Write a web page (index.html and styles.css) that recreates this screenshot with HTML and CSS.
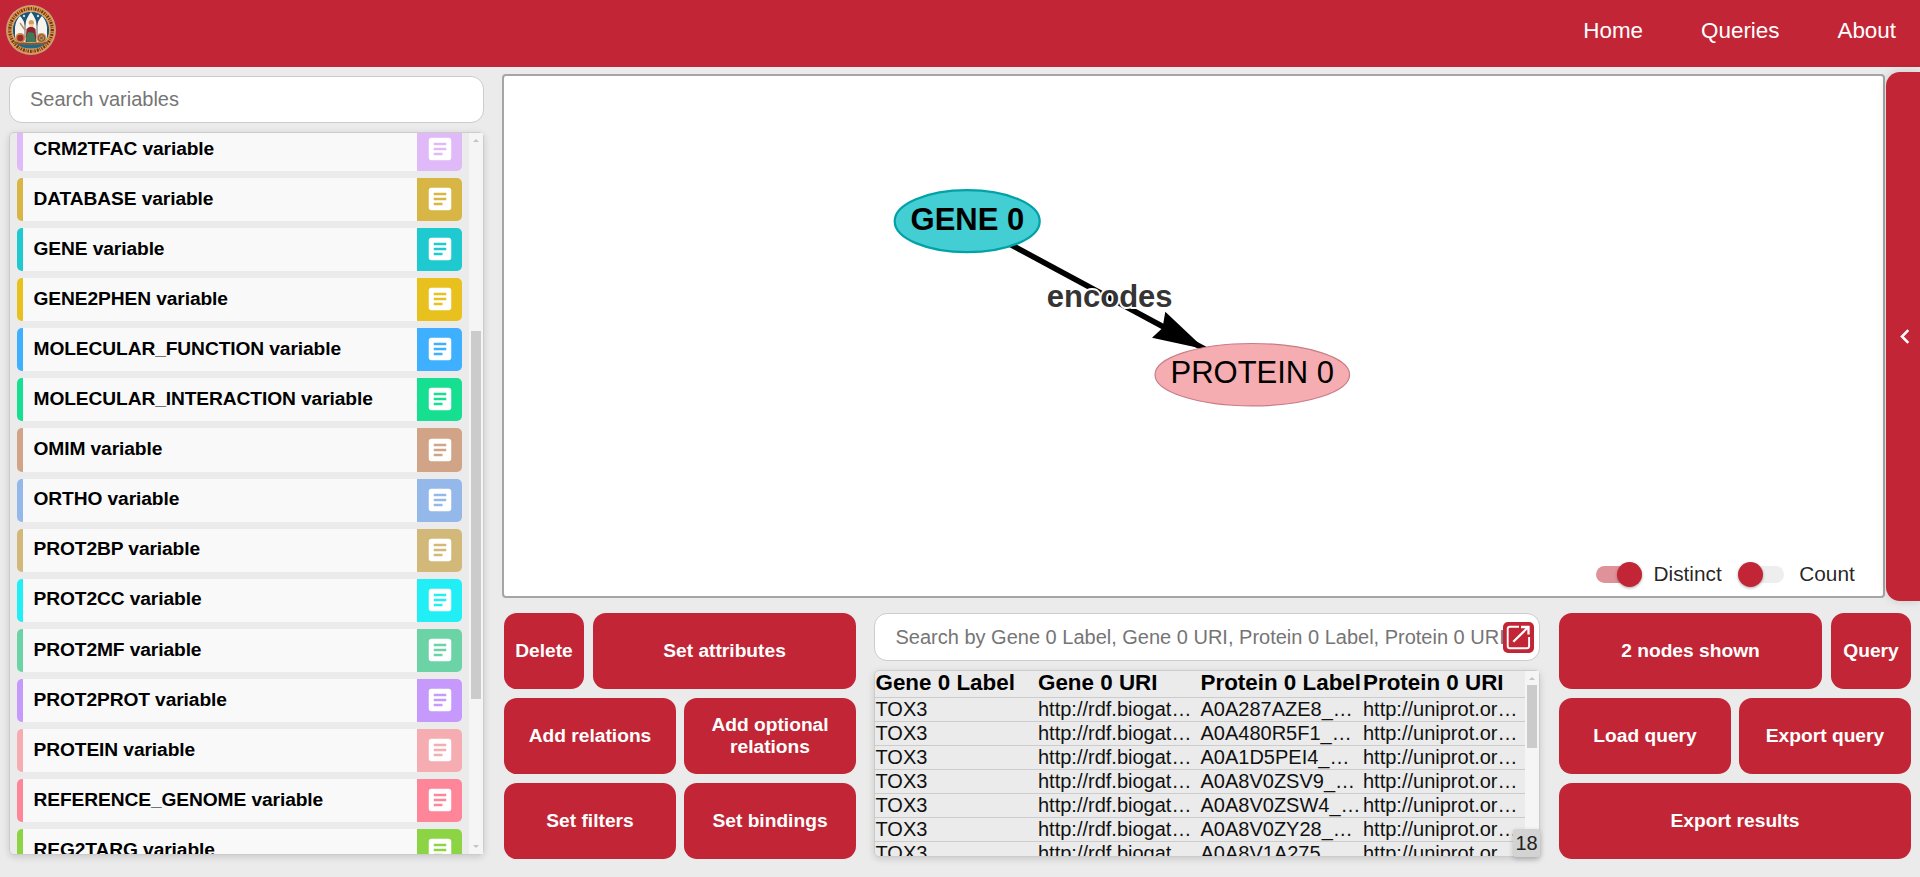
FILE: index.html
```html
<!DOCTYPE html>
<html lang="en">
<head>
<meta charset="utf-8">
<title>Query builder</title>
<link rel="stylesheet" href="styles.css">
</head>
<body>
<svg class="defs" width="0" height="0">
  <symbol id="article" viewBox="0 0 24 24"><path d="M19 3H5c-1.1 0-2 .9-2 2v14c0 1.1.9 2 2 2h14c1.1 0 2-.9 2-2V5c0-1.1-.9-2-2-2zm-5 14H7v-2h7v2zm3-4H7v-2h10v2zm0-4H7V7h10v2z"/></symbol>
</svg>

<header class="topbar">
  <svg class="logo" viewBox="0 0 50 50">
    <circle cx="25" cy="25" r="25" fill="#b9a08c"/>
    <circle cx="25" cy="25" r="24" fill="#eb9547"/>
    <circle cx="25" cy="25" r="21.3" fill="none" stroke="#5b3a22" stroke-width="3.2" stroke-dasharray="1.3 1.1 .7 1 1.8 1.2"/>
    <circle cx="25" cy="25" r="18.6" fill="#1c5577" stroke="#e9bd86" stroke-width=".8"/>
    <path d="M9 33V22q1-7 5-11 4 4 5 10 1-8 6-14 5 6 6 14 1-6 5-10 4 4 5 11v11q-3 5-6 6H15q-4-2-6-6z" fill="#f7f4ee"/>
    <path d="M19 17v16M31 17v16" stroke="#3b4b5b" stroke-width=".8"/>
    <path d="M10 38h30q-5 5.500-15 5.500T10 38z" fill="#1c6a8c"/>
    <path d="M8 36.500q17 2 34 0v2q-17 3-34 0z" fill="#8a5a2c"/>
    <path d="M20.500 24q4.500-5 9 0l1 13H19.500z" fill="#8b2430"/>
    <path d="M22 27l6 1 2 9h-9l-1-4z" fill="#3d7a58"/>
    <path d="M19 25l-5-7" stroke="#b98b5c" stroke-width="1.300"/>
    <circle cx="25.300" cy="17.500" r="2.600" fill="#d99a55"/>
    <path d="M23.800 19h3.400v3h-3.400z" fill="#f0c69c"/>
    <circle cx="14.300" cy="33" r="5" fill="#c98a4c"/><circle cx="14.300" cy="33" r="3.200" fill="#9c2a2c"/>
    <circle cx="35.500" cy="33" r="5" fill="#d28f4e"/><circle cx="35.500" cy="33" r="3.300" fill="none" stroke="#7a5230" stroke-width="1"/>
    <path d="M34 31.500l3 3M37 31.500l-3 3" stroke="#4c4a6a" stroke-width="1"/>
    <circle cx="18" cy="11" r="1.200" fill="#cfd8dd"/><circle cx="32" cy="11" r="1.200" fill="#cfd8dd"/>
  </svg>
  <nav class="nav"><a>Home</a><a>Queries</a><a>About</a></nav>
</header>

<main class="page">
  <aside class="sidebar">
    <div class="search">Search variables</div>
    <div class="panel variables">
      <div class="viewport">
        <ul class="varlist">
          <li class="var lilac"><span>CRM2TFAC variable</span><i><svg><use href="#article"/></svg></i></li>
          <li class="var gold"><span>DATABASE variable</span><i><svg><use href="#article"/></svg></i></li>
          <li class="var teal"><span>GENE variable</span><i><svg><use href="#article"/></svg></i></li>
          <li class="var yellow"><span>GENE2PHEN variable</span><i><svg><use href="#article"/></svg></i></li>
          <li class="var blue"><span>MOLECULAR_FUNCTION variable</span><i><svg><use href="#article"/></svg></i></li>
          <li class="var green"><span>MOLECULAR_INTERACTION variable</span><i><svg><use href="#article"/></svg></i></li>
          <li class="var tan"><span>OMIM variable</span><i><svg><use href="#article"/></svg></i></li>
          <li class="var sky"><span>ORTHO variable</span><i><svg><use href="#article"/></svg></i></li>
          <li class="var sand"><span>PROT2BP variable</span><i><svg><use href="#article"/></svg></i></li>
          <li class="var cyan"><span>PROT2CC variable</span><i><svg><use href="#article"/></svg></i></li>
          <li class="var mint"><span>PROT2MF variable</span><i><svg><use href="#article"/></svg></i></li>
          <li class="var violet"><span>PROT2PROT variable</span><i><svg><use href="#article"/></svg></i></li>
          <li class="var pink"><span>PROTEIN variable</span><i><svg><use href="#article"/></svg></i></li>
          <li class="var rose"><span>REFERENCE_GENOME variable</span><i><svg><use href="#article"/></svg></i></li>
          <li class="var lime"><span>REG2TARG variable</span><i><svg><use href="#article"/></svg></i></li>
        </ul>
      </div>
      <div class="scrollbar"><b class="up"></b><b class="thumb"></b><b class="down"></b></div>
    </div>
  </aside>

  <section class="work">
    <div class="stage">
      <div class="canvas">
        <svg class="graph" viewBox="504 76 1379 520">
          <path d="M967.200 221.200L1205 349.200" stroke="#000" stroke-width="5.600"/>
          <path d="M1205 349.200L1165.300 311.700 1162.500 328 1152 337.700z"/>
          <ellipse cx="967.200" cy="221.200" rx="72.500" ry="31" fill="#43ced3" stroke="#00a2a7" stroke-width="2.200"/>
          <ellipse cx="1252.300" cy="374.700" rx="97.300" ry="31.200" fill="#f5adb2" stroke="#c87c86" stroke-width="1.200"/>
          <text class="node strong" x="967.400" y="230">GENE 0</text>
          <text class="node" x="1252.300" y="382.700">PROTEIN 0</text>
          <text class="edge" x="1109.700" y="306.700">encodes</text>
        </svg>
        <div class="switches">
          <span class="switch on"></span><label>Distinct</label>
          <span class="switch"></span><label>Count</label>
        </div>
      </div>
      <div class="drawer"><svg width="10" height="15" viewBox="0 0 10 15"><path d="M8.300 1.200L2 7.500l6.300 6.300" fill="none" stroke="#fff" stroke-width="2.600"/></svg></div>
    </div>

    <div class="tools">
      <div class="buttons">
        <div class="row"><button class="small">Delete</button><button>Set attributes</button></div>
        <div class="row even"><button>Add relations</button><button>Add optional relations</button></div>
        <div class="row even"><button>Set filters</button><button>Set bindings</button></div>
      </div>

      <div class="results">
        <div class="search wide">Search by Gene 0 Label, Gene 0 URI, Protein 0 Label, Protein 0 URI
          <span class="open"><svg width="25" height="25" viewBox="0 0 25 25" fill="none" stroke="#fff"><path d="M13 1.800H4q-2.300 0-2.300 2.300v16.800q0 2.300 2.300 2.300h16.800q2.300 0 2.300-2.300V12" stroke-width="1.900"/><path d="M7.300 16.800L21.500 2.800M15 2h7.500v7.500" stroke-width="2.300"/></svg></span>
        </div>
        <div class="panel table">
          <div class="viewport">
            <div class="tr head"><span>Gene 0 Label</span><span>Gene 0 URI</span><span>Protein 0 Label</span><span>Protein 0 URI</span></div>
            <div class="tr"><span>TOX3</span><span>http://rdf.biogat…</span><span>A0A287AZE8_…</span><span>http://uniprot.or…</span></div>
            <div class="tr"><span>TOX3</span><span>http://rdf.biogat…</span><span>A0A480R5F1_…</span><span>http://uniprot.or…</span></div>
            <div class="tr"><span>TOX3</span><span>http://rdf.biogat…</span><span>A0A1D5PEI4_…</span><span>http://uniprot.or…</span></div>
            <div class="tr"><span>TOX3</span><span>http://rdf.biogat…</span><span>A0A8V0ZSV9_…</span><span>http://uniprot.or…</span></div>
            <div class="tr"><span>TOX3</span><span>http://rdf.biogat…</span><span>A0A8V0ZSW4_…</span><span>http://uniprot.or…</span></div>
            <div class="tr"><span>TOX3</span><span>http://rdf.biogat…</span><span>A0A8V0ZY28_…</span><span>http://uniprot.or…</span></div>
            <div class="tr"><span>TOX3</span><span>http://rdf.biogat…</span><span>A0A8V1A275_…</span><span>http://uniprot.or…</span></div>
          </div>
          <div class="scrollbar"><b class="up"></b><b class="thumb"></b></div>
          <div class="count">18</div>
        </div>
      </div>

      <div class="buttons">
        <div class="row"><button>2 nodes shown</button><button class="small">Query</button></div>
        <div class="row even"><button>Load query</button><button>Export query</button></div>
        <div class="row"><button>Export results</button></div>
      </div>
    </div>
  </section>
</main>
</body>
</html>
```
FILE: styles.css
```css
* { box-sizing: border-box; }
body {
  margin: 0;
  height: 877px;
  overflow: hidden;
  background: #ebebeb;
  font-family: "Liberation Sans", Arial, sans-serif;
  font-size: 20px;
  display: flex;
  flex-direction: column;
}
.defs { position: absolute; }

/* Header */
.topbar {
  flex: none;
  height: 67px;
  background: #c22535;
  display: flex;
  justify-content: space-between;
  padding: 5px 24px 0 6px;
}
.logo { width: 50px; height: 50px; }
.nav { display: flex; gap: 58px; padding-top: 13px; font-size: 22.400px; line-height: 26px; color: #fff; }

.page { flex: 1; display: flex; min-height: 0; }

/* Sidebar */
.sidebar { flex: none; width: 484px; padding: 9px 0 22px 9px; display: flex; flex-direction: column; gap: 9px; }
.search {
  flex: none;
  height: 47px;
  border: 1px solid #ccc;
  border-radius: 13px;
  background: #fff;
  color: #757575;
  padding-left: 20px;
  line-height: 45px;
  white-space: nowrap;
}
.panel {
  flex: 1;
  min-height: 0;
  display: flex;
  border: 1px solid #ccc;
  border-radius: 5px;
  box-shadow: 0 2px 7px rgba(0, 0, 0, .15);
}
.viewport { flex: 1; min-width: 0; overflow: hidden; }
.varlist { list-style: none; margin: -5px 0 0; padding: 0 7px; display: flex; flex-direction: column; gap: 7px; }
.var {
  --c: #ccc;
  flex: none;
  height: 43.080px;
  display: flex;
  align-items: center;
  border-left: 6px solid var(--c);
  border-radius: 5px;
  overflow: hidden;
  background: #f9f9f9;
  font-size: 19.200px;
  font-weight: bold;
  letter-spacing: -.1px;
  color: #000;
}
.var span { flex: 1; padding: 0 0 1.600px 10.500px; }
.var i { width: 45px; height: 100%; background: var(--c); display: flex; align-items: center; justify-content: center; }
.var svg { width: 30px; height: 30px; margin-bottom: 1px; fill: #fff; }
.lilac { --c: #dfb9f8; }
.gold { --c: #d8b646; }
.teal { --c: #1ecad0; }
.yellow { --c: #e8c11f; }
.blue { --c: #3eb0ff; }
.green { --c: #16df92; }
.tan { --c: #d1a487; }
.sky { --c: #95b8ea; }
.sand { --c: #d3b979; }
.cyan { --c: #22eff5; }
.mint { --c: #6bd3a6; }
.violet { --c: #c59afc; }
.pink { --c: #f5adb2; }
.rose { --c: #ff8599; }
.lime { --c: #8dd445; }

.scrollbar {
  flex: none;
  width: 14px;
  background: #f5f5f5;
  display: flex;
  flex-direction: column;
  align-items: center;
}
.up, .down { border: 3px solid transparent; border-top: 0; border-bottom: 3px solid #c4c4c4; margin-top: 6px; }
.down { border-top: 3px solid #c4c4c4; border-bottom: 0; margin: auto 0 6px; }
.thumb { width: 10px; height: 63px; margin-top: 5px; background: #cbcbcb; }
.variables .thumb { height: 368px; margin-top: 189px; }

/* Graph area */
.work { flex: 1; min-width: 0; display: flex; flex-direction: column; padding-left: 18px; }
.stage { flex: none; height: 534px; display: flex; gap: 1px; padding-top: 5px; }
.canvas {
  position: relative;
  width: 1383px;
  height: 524px;
  margin-top: 2px;
  border: 2px solid #a5a5a5;
  border-radius: 4px;
  background: #fff;
}
.graph { display: block; width: 1379px; height: 520px; }
.node, .edge { font-size: 31px; text-anchor: middle; fill: #000; }
.strong, .edge { font-weight: bold; }
.edge { fill: #343434; stroke: #fff; stroke-width: 4px; paint-order: stroke; stroke-linejoin: round; }
.switches { position: absolute; left: 1092px; top: 483px; height: 30px; display: flex; align-items: center; font-size: 20.800px; color: rgba(0, 0, 0, .87); }
.switch { width: 46px; height: 17px; border-radius: 9px; background: #eee; display: flex; align-items: center; }
.switch::before { content: ""; flex: none; width: 25px; height: 25px; border-radius: 50%; background: #c22535; box-shadow: 0 1px 3px rgba(0, 0, 0, .35); }
.switch.on { background: #e0929a; justify-content: flex-end; }
.switches label { margin: 0 16.600px 0 11.500px; }
.switches label:last-child { margin: 0 0 0 15px; }
.drawer {
  position: relative;
  width: 34px;
  height: 529px;
  border-radius: 14px 0 0 14px;
  background: #c22535;
  box-shadow: 0 0 10px rgba(0, 0, 0, .15);
  display: flex;
  align-items: center;
  padding-left: 14px;
}

/* Bottom tools */
.tools { display: flex; gap: 18px; padding: 12px 9px 0 2px; }
.buttons { flex: none; width: 352px; display: flex; flex-direction: column; gap: 9px; }
.buttons:last-child { margin-left: auto; }
.row { display: flex; gap: 9px; height: 76px; }
.row.even { gap: 8px; }
button {
  flex: 1;
  border: 0;
  border-radius: 13px;
  background: #c22535;
  color: #fff;
  font: bold 19.200px/22px "Liberation Sans", Arial, sans-serif;
  padding: 0 20px 1px;
}
button.small { flex: none; width: 80px; padding: 0 0 1px; }
.results { flex: none; width: 666px; height: 244px; display: flex; flex-direction: column; gap: 9px; }
.search.wide { position: relative; height: 48px; line-height: 46px; padding-left: 20.500px; }
.open {
  position: absolute;
  right: 5px;
  top: 8px;
  width: 31px;
  height: 31px;
  border-radius: 5px;
  background: #c22535;
  display: flex;
  align-items: center;
  justify-content: center;
}
.table { position: relative; }
.tr { display: grid; grid-template-columns: repeat(4, 162.500px); height: 24px; padding-left: .5px; line-height: 22px; border-bottom: 1px solid #ccc; white-space: nowrap; color: #111; }
.head { height: 27px; line-height: 24px; font-size: 22.400px; font-weight: bold; color: #000; }
.count {
  position: absolute;
  right: -1px;
  bottom: -1px;
  width: 27px;
  height: 28px;
  border-radius: 3px;
  background: #d3d3d3;
  box-shadow: 0 2px 5px rgba(0, 0, 0, .2);
  color: #222;
  line-height: 28px;
  text-align: center;
}
```
